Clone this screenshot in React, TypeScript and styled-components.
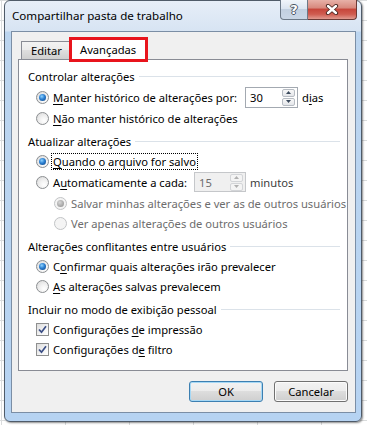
import React from "react";
import styled, { createGlobalStyle } from "styled-components";

const GlobalStyle = createGlobalStyle`
  html, body { margin: 0; padding: 0; }
  body {
    width: 367px;
    height: 425px;
    overflow: hidden;
    background-color: #fff;
    background-image:
      linear-gradient(90deg, #dadcdd 1px, transparent 1px),
      linear-gradient(#dadcdd 1px, transparent 1px);
    background-size: 64px 20px;
    background-position: 1px 0, 0 0;
    font-family: "Noto Sans", "Segoe UI", sans-serif;
    font-size: 11.2px;
    color: #000;
  }
`;

const Window = styled.div`
  box-sizing: border-box;
  margin-left: 4px;
  width: 358px;
  height: 422px;
  border: 1px solid #4f5b69;
  border-radius: 6px;
  background: linear-gradient(180deg, #e6eef8 0, #d7e4f3 30px, #bcd5ef 31px, #b6d3f2 100%);
  padding: 0 5px 8px 6px;
  display: flex;
  flex-direction: column;
  box-shadow: 1px 1px 2px rgba(0, 0, 0, 0.45);
`;

const TitleBar = styled.div`
  height: 30px;
  display: flex;
  align-items: flex-start;
`;

const Title = styled.div`
  padding: 6px 0 0 1px;
  line-height: 17px;
  font-size: 11.6px;
  color: #000;
`;

const Controls = styled.div`
  margin: -1px -1px 0 auto;
  display: flex;
`;

const CaptionButton = styled.div<{ $close?: boolean }>`
  box-sizing: border-box;
  width: ${p => (p.$close ? 49 : 28)}px;
  height: 20px;
  display: flex;
  align-items: center;
  justify-content: center;
  border: 1px solid ${p => (p.$close ? "#6b3a36" : "#6c7987")};
  border-top: none;
  border-left-width: ${p => (p.$close ? 0 : 1)}px;
  border-radius: ${p => (p.$close ? "0 0 4px 0" : "0 0 0 4px")};
  background: ${p =>
    p.$close
      ? "linear-gradient(180deg, #e7b1a8 0, #d88a7f 40%, #c7473c 50%, #cf5c50 75%, #e19b90 100%)"
      : "linear-gradient(180deg, #f1f5fa 0, #dbe5f0 45%, #c2d0e0 50%, #cad7e6 100%)"};
`;

const HelpGlyph = styled.span`
  font-family: "DejaVu Sans", sans-serif;
  font-weight: bold;
  font-size: 13px;
  line-height: 13px;
  color: #fff;
  text-shadow: 1px 0 0 #4b5663, -1px 0 0 #4b5663, 0 1px 0 #4b5663, 0 -1px 0 #4b5663;
`;

const Client = styled.div`
  flex: 1;
  border: 1px solid #7b8ea5;
  background: #f0f0f0;
  padding: 4px 7px 0 6px;
  display: flex;
  flex-direction: column;
`;

const TabStrip = styled.div`
  display: flex;
  align-items: flex-end;
  padding: 1px 0 0 3px;
`;

const Tab = styled.div<{ $active?: boolean }>`
  position: relative;
  box-sizing: border-box;
  height: ${p => (p.$active ? 23 : 18)}px;
  width: ${p => (p.$active ? 77 : 49)}px;
  margin-bottom: ${p => (p.$active ? -1 : 0)}px;
  z-index: ${p => (p.$active ? 2 : 0)};
  border: 1px solid #898c95;
  border-bottom: none;
  border-left-width: ${p => (p.$active ? 0 : 1)}px;
  background: ${p =>
    p.$active ? "#fff" : "linear-gradient(180deg, #f3f3f3 0, #ebebeb 50%, #dedede 50%, #cfcfcf 100%)"};
  padding-left: ${p => (p.$active ? 10 : 9)}px;
  line-height: ${p => (p.$active ? 24 : 18)}px;
`;

/* red annotation rectangle drawn over the selected tab */
const Highlight = styled.div`
  position: absolute;
  top: -1px;
  left: -1px;
  right: -2px;
  bottom: -2px;
  border: 3px solid #e8141c;
`;

const Panel = styled.div`
  border: 1px solid #898c95;
  background: #fff;
  padding: 6px 7px 11px 9px;
`;

const Section = styled.div`
  & + & {
    margin-top: 3px;
  }
`;

const Header = styled.div`
  display: flex;
  align-items: center;
  height: 20px;
  gap: 4px;
  &::after {
    content: "";
    flex: 1;
    height: 1px;
    background: #dbe2e9;
  }
`;

const Row = styled.div<{ $indent: number; $tall?: boolean }>`
  display: flex;
  align-items: center;
  height: ${p => (p.$tall ? 22 : 20)}px;
  padding-left: ${p => p.$indent}px;
`;

const Choice = styled.div<{ $w?: number }>`
  display: flex;
  align-items: center;
  width: ${p => (p.$w ? `${p.$w}px` : "auto")};
  flex-shrink: 0;
`;

const RadioDot = styled.span<{ $on?: boolean; $off?: boolean }>`
  box-sizing: border-box;
  width: 13px;
  height: 13px;
  border-radius: 50%;
  border: 1px solid ${p => (p.$off ? "#c2c4c6" : "#8b8e91")};
  background: ${p => (p.$off ? "#f4f4f4" : "radial-gradient(circle at 65% 70%, #ffffff 0, #f2f2f2 40%, #d6d6d6 100%)")};
  display: flex;
  align-items: center;
  justify-content: center;
  flex-shrink: 0;
  &::after {
    content: "";
    display: ${p => (p.$on ? "block" : "none")};
    width: 7px;
    height: 7px;
    border-radius: 50%;
    background: ${p =>
      p.$off
        ? "radial-gradient(circle at 40% 35%, #d8d8d8 0, #a9a9a9 60%, #8f8f8f 100%)"
        : "radial-gradient(circle at 40% 35%, #8fd3ff 0, #2b7fd1 45%, #0f3f7c 100%)"};
  }
`;

const Box = styled.span`
  box-sizing: border-box;
  width: 13px;
  height: 13px;
  border: 1px solid #8e8f8f;
  background: linear-gradient(135deg, #dcdcdc 0, #f4f4f4 60%, #fff 100%);
  display: flex;
  align-items: center;
  justify-content: center;
  flex-shrink: 0;
`;

const Label = styled.span<{ $off?: boolean; $focus?: boolean }>`
  margin-left: 2px;
  padding: 0 1px;
  border: 1px ${p => (p.$focus ? "dotted #000" : "solid transparent")};
  line-height: 15px;
  white-space: nowrap;
  color: ${p => (p.$off ? "#6d6d6d" : "#000")};
  u {
    text-underline-offset: 2px;
  }
`;

const Field = styled.div<{ $off?: boolean }>`
  box-sizing: border-box;
  width: ${p => (p.$off ? 52 : 53)}px;
  height: ${p => (p.$off ? 20 : 21)}px;
  border: 1px solid ${p => (p.$off ? "#c5c7ca" : "#a3a9b1")};
  background: ${p => (p.$off ? "#f0f0f0" : "#fff")};
  color: ${p => (p.$off ? "#6d6d6d" : "#000")};
  display: flex;
  align-items: center;
  padding: 0 2px 0 4px;
`;

const FieldText = styled.span`
  flex: 1;
  line-height: 15px;
`;

const Spin = styled.div`
  display: flex;
  flex-direction: column;
  gap: 1px;
`;

const SpinBtn = styled.div<{ $off?: boolean }>`
  box-sizing: border-box;
  width: 13px;
  height: 8px;
  border: 1px solid ${p => (p.$off ? "#d3d5d8" : "#b7bcc3")};
  border-radius: 2px;
  background: ${p => (p.$off ? "#f4f4f4" : "linear-gradient(180deg, #f8f8f8, #e4e6ea)")};
  display: flex;
  align-items: center;
  justify-content: center;
`;

const Unit = styled.span<{ $dim?: boolean }>`
  margin-left: 4px;
  color: ${p => (p.$dim ? "#3c3c3c" : "#000")};
  u {
    text-underline-offset: 2px;
  }
`;

const Footer = styled.div`
  display: flex;
  justify-content: flex-end;
  gap: 11px;
  padding-top: 10px;
`;

const Button = styled.div<{ $default?: boolean }>`
  box-sizing: border-box;
  width: 74px;
  height: 21px;
  border: 1px solid ${p => (p.$default ? "#3c7fb1" : "#707070")};
  border-radius: 3px;
  background: linear-gradient(180deg, #f2f2f2 0, #ebebeb 50%, #dddddd 50%, #cfcfcf 100%);
  box-shadow: ${p => (p.$default ? "inset 0 0 0 1px #a6d8f5" : "inset 0 0 0 1px #fbfbfb")};
  display: flex;
  align-items: center;
  justify-content: center;
`;

const CloseX = () => (
  <svg width="14" height="11" viewBox="0 0 14 11">
    <path d="M3 2 L11 9 M11 2 L3 9" stroke="#4a2621" strokeWidth="4.2" strokeLinecap="round" />
    <path d="M3 2 L11 9 M11 2 L3 9" stroke="#fff" strokeWidth="2.4" strokeLinecap="round" />
  </svg>
);

const Arrow = ({ up, off }: { up?: boolean; off?: boolean }) => (
  <svg width="5" height="3" viewBox="0 0 5 3">
    <path d={up ? "M0 3 L2.5 0 L5 3 Z" : "M0 0 L2.5 3 L5 0 Z"} fill={off ? "#b0b0b0" : "#3b4a5c"} />
  </svg>
);

const Check = () => (
  <svg width="9" height="9" viewBox="0 0 9 9">
    <path d="M1 4.5 L3.5 7.2 L8 1.2" fill="none" stroke="#3c4f86" strokeWidth="1.7" />
  </svg>
);

const Spinner = ({ value, off }: { value: string; off?: boolean }) => (
  <Field $off={off}>
    <FieldText>{value}</FieldText>
    <Spin>
      <SpinBtn $off={off}>
        <Arrow up off={off} />
      </SpinBtn>
      <SpinBtn $off={off}>
        <Arrow off={off} />
      </SpinBtn>
    </Spin>
  </Field>
);

export default function App() {
  return (
    <>
      <GlobalStyle />
      <Window>
        <TitleBar>
          <Title>Compartilhar pasta de trabalho</Title>
          <Controls>
            <CaptionButton>
              <HelpGlyph>?</HelpGlyph>
            </CaptionButton>
            <CaptionButton $close>
              <CloseX />
            </CaptionButton>
          </Controls>
        </TitleBar>

        <Client>
          <TabStrip>
            <Tab>Editar</Tab>
            <Tab $active>
              Avançadas
              <Highlight />
            </Tab>
          </TabStrip>

          <Panel>
            <Section>
              <Header>Controlar alterações</Header>
              <Row $indent={8} $tall>
                <Choice $w={209}>
                  <RadioDot $on />
                  <Label><u>M</u>anter histórico de alterações por:</Label>
                </Choice>
                <Spinner value="30" />
                <Unit>d<u>i</u>as</Unit>
              </Row>
              <Row $indent={8}>
                <Choice>
                  <RadioDot />
                  <Label><u>N</u>ão manter histórico de alterações</Label>
                </Choice>
              </Row>
            </Section>

            <Section>
              <Header>Atualizar alterações</Header>
              <Row $indent={8}>
                <Choice>
                  <RadioDot $on />
                  <Label $focus><u>Q</u>uando o arquivo for salvo</Label>
                </Choice>
              </Row>
              <Row $indent={8} $tall>
                <Choice $w={158}>
                  <RadioDot />
                  <Label>A<u>u</u>tomaticamente a cada:</Label>
                </Choice>
                <Spinner value="15" off />
                <Unit $dim>minutos</Unit>
              </Row>
              <Row $indent={26}>
                <Choice>
                  <RadioDot $on $off />
                  <Label $off>Salvar minhas alterações e ver as de outros usuários</Label>
                </Choice>
              </Row>
              <Row $indent={26}>
                <Choice>
                  <RadioDot $off />
                  <Label $off>Ver apenas alterações de outros usuários</Label>
                </Choice>
              </Row>
            </Section>

            <Section>
              <Header>Alterações conflitantes entre usuários</Header>
              <Row $indent={8}>
                <Choice>
                  <RadioDot $on />
                  <Label>C<u>o</u>nfirmar quais alterações irão prevalecer</Label>
                </Choice>
              </Row>
              <Row $indent={8}>
                <Choice>
                  <RadioDot />
                  <Label><u>A</u>s alterações salvas prevalecem</Label>
                </Choice>
              </Row>
            </Section>

            <Section>
              <Header>Incluir no modo de exibição pessoal</Header>
              <Row $indent={8}>
                <Choice>
                  <Box><Check /></Box>
                  <Label>Configurações <u>d</u>e impressão</Label>
                </Choice>
              </Row>
              <Row $indent={8}>
                <Choice>
                  <Box><Check /></Box>
                  <Label>Configurações d<u>e</u> filtro</Label>
                </Choice>
              </Row>
            </Section>
          </Panel>

          <Footer>
            <Button $default>OK</Button>
            <Button>Cancelar</Button>
          </Footer>
        </Client>
      </Window>
    </>
  );
}
